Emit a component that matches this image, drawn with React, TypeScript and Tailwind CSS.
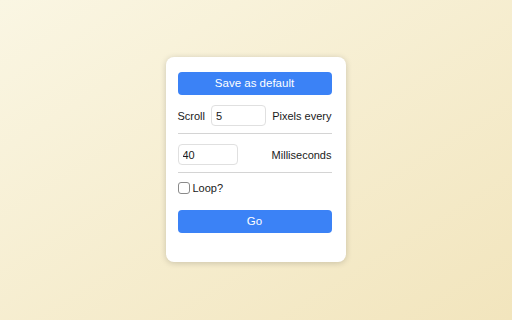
import React from "react";

export default function App() {
  return (
    <div
      className="w-[512px] h-[320px] flex items-center justify-center bg-gradient-to-br from-[#faf6e3] to-[#f2e5bd]"
      style={{ fontFamily: "'Liberation Sans', Arial, sans-serif" }}
    >
      <div className="w-[180px] h-[205px] bg-white rounded-lg shadow-[0_1px_6px_rgba(0,0,0,0.18)] pl-3 pr-[14px] pt-[15px] flex flex-col text-[11px] text-[#1a1a1a] -mt-[1px] -ml-[1px]">
        <button className="h-[23px] w-full shrink-0 rounded bg-[#3b82f6] text-white text-[11.5px] flex items-center justify-center">
          Save as default
        </button>
        <div className="flex items-end mt-[10px] pb-[7px] border-b border-[#d4d4d4] whitespace-nowrap">
          <span className="leading-none mb-[4px]">Scroll</span>
          <input
            defaultValue="5"
            className="ml-[6px] w-[55px] shrink-0 h-[21px] border border-[#e0e0e0] rounded px-[4px] text-[11px] outline-none"
          />
          <span className="ml-auto leading-none mb-[4px]">Pixels every</span>
        </div>
        <div className="flex items-end mt-[10px] pb-[7px] border-b border-[#d4d4d4] whitespace-nowrap">
          <input
            defaultValue="40"
            className="w-[60px] shrink-0 h-[21px] border border-[#e0e0e0] rounded px-[4px] text-[11px] outline-none"
          />
          <span className="ml-auto leading-none mb-[4px]">Milliseconds</span>
        </div>
        <label className="flex items-center mt-[9px] gap-[3px]">
          <span className="w-[12px] h-[12px] border border-[#8a8a8a] rounded-[3px] bg-white" />
          <span className="leading-none">Loop?</span>
        </label>
        <button className="mt-[16px] h-[23px] w-full shrink-0 rounded bg-[#3b82f6] text-white text-[11.5px] flex items-center justify-center">
          Go
        </button>
      </div>
    </div>
  );
}
